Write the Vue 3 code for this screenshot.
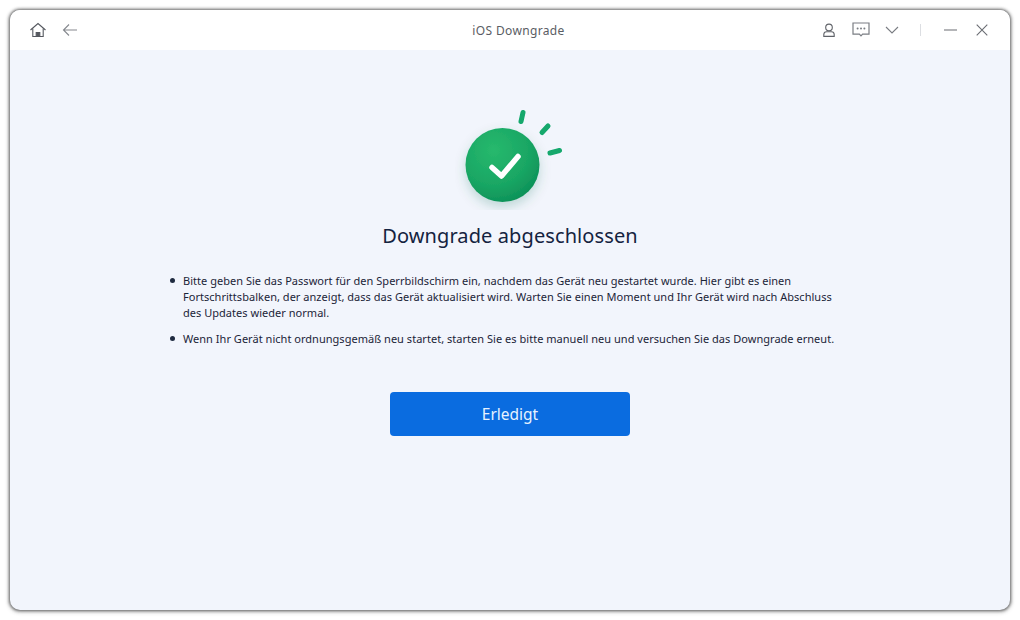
<script setup>
const items = [
  ['Bitte geben Sie das Passwort für den Sperrbildschirm ein, nachdem das Gerät neu gestartet wurde. Hier gibt es einen', 'Fortschrittsbalken, der anzeigt, dass das Gerät aktualisiert wird. Warten Sie einen Moment und Ihr Gerät wird nach Abschluss', 'des Updates wieder normal.'],
  ['Wenn Ihr Gerät nicht ordnungsgemäß neu startet, starten Sie es bitte manuell neu und versuchen Sie das Downgrade erneut.'],
]
</script>

<template>
  <div class="page">
    <div class="window">
      <header class="bar">
        <div class="left">
          <svg class="ic" width="18" height="18" viewBox="0 0 18 18" fill="none" stroke="#55585f" stroke-width="1.1">
            <path d="M1.5 9 9 2.5 16.5 9" />
            <path d="M3.8 7.5V15.5H14.2V7.5" />
            <path d="M7.2 15.5V11.5H10.8V15.5Z" fill="#55585f" />
          </svg>
          <svg class="ic" width="16" height="14" viewBox="0 0 16 14" fill="none" stroke="#85888e" stroke-width="1.1">
            <path d="M15 7H1.5M7 1.5 1.5 7 7 12.5" />
          </svg>
        </div>
        <div class="title">iOS Downgrade</div>
        <div class="right">
          <svg width="14" height="14" viewBox="0 0 14 14" fill="none" stroke="#5f6268" stroke-width="1.1">
            <circle cx="7" cy="4.4" r="3.3" />
            <path d="M1.8 13.4V11.6C1.8 9.9 3 8.8 4.6 8.8H9.4C11 8.8 12.2 9.9 12.2 11.6V13.4Z" />
          </svg>
          <svg class="chat" width="18" height="16" viewBox="0 0 18 16" fill="none" stroke="#7a7d83" stroke-width="1.2">
            <path d="M1 1H17V12.2H10.6L9 13.8 7.4 12.2H1Z" />
            <g fill="#7a7d83" stroke="none"><circle cx="5.6" cy="6.6" r="1" /><circle cx="9" cy="6.6" r="1" /><circle cx="12.4" cy="6.6" r="1" /></g>
          </svg>
          <svg class="chev" width="14" height="8" viewBox="0 0 14 8" fill="none" stroke="#7a7d83" stroke-width="1.1">
            <path d="M1 1 7 7 13 1" />
          </svg>
          <span class="sep"></span>
          <svg class="min" width="13" height="2" viewBox="0 0 13 2" stroke="#6a6d73" stroke-width="1.2"><path d="M0 1H13" /></svg>
          <svg class="close" width="12" height="12" viewBox="0 0 12 12" stroke="#6a6d73" stroke-width="1.1"><path d="M.7.7 11.3 11.3M11.3.7.7 11.3" /></svg>
        </div>
      </header>
      <main class="content">
        <svg class="badge" width="110" height="104" viewBox="0 0 110 104">
          <defs>
            <radialGradient id="g" cx="0.38" cy="0.3" r="0.8">
              <stop offset="0" stop-color="#27b96d" />
              <stop offset="0.6" stop-color="#19a664" />
              <stop offset="1" stop-color="#0a8c55" />
            </radialGradient>
            <filter id="s" x="-40%" y="-40%" width="180%" height="190%">
              <feDropShadow dx="0" dy="5" stdDeviation="6" flood-color="#0c6a50" flood-opacity=".22" />
            </filter>
            <filter id="b" x="-30%" y="-30%" width="160%" height="160%">
              <feGaussianBlur stdDeviation=".4" />
            </filter>
          </defs>
          <circle cx="47.5" cy="59" r="37" fill="url(#g)" filter="url(#s)" />
          <path d="M37 61.5 46.5 70 63 50.5" fill="none" stroke="#fff" stroke-width="5.5" stroke-linecap="round" stroke-linejoin="round" filter="url(#b)" />
          <g stroke="#12a86c" stroke-width="5" stroke-linecap="round" filter="url(#b)">
            <path d="M68 6.5 66 15.5" />
            <path d="M93 20 87 26.5" />
            <path d="M104.500 44.500 95 47" />
          </g>
        </svg>
        <h1>Downgrade abgeschlossen</h1>
        <ul>
          <li v-for="(lines, i) in items" :key="i">
            <span v-for="line in lines" :key="line" class="line">{{ line }}</span>
          </li>
        </ul>
        <button type="button">Erledigt</button>
      </main>
    </div>
  </div>
</template>

<style>
html, body { margin: 0; background: #fff; }
</style>

<style scoped>
.page { width: 1020px; height: 620px; padding: 10px; box-sizing: border-box; font-family: "Noto Sans", "Open Sans", sans-serif; }
.window { width: 1000px; height: 600px; border-radius: 10px; background: #f2f5fc; overflow: hidden; display: flex; flex-direction: column; box-shadow: 0 0 3px 1px rgba(50,50,50,.65), 0 1px 4px 1px rgba(60,60,60,.3); }
.bar { height: 40px; flex: none; background: #fff; display: grid; grid-template-columns: 1fr auto 1fr; align-items: center; padding: 0 22px 0 19px; }
.left { display: flex; align-items: center; gap: 15px; }
.right { display: flex; align-items: center; justify-content: flex-end; }
.title { font-size: 12px; color: #5a5d64; letter-spacing: .35px; margin-left: 20px; }
.chat { margin-left: 16px; }
.chev { margin-left: 15px; }
.sep { width: 1px; height: 12px; background: #dcdee2; margin-left: 21px; }
.min { margin-left: 23px; }
.close { margin-left: 19px; }
.content { flex: 1; display: flex; flex-direction: column; align-items: center; color: #1a2438; }
.badge { margin-top: 56px; display: block; }
h1 { margin: 11px 0 0; font-size: 20px; line-height: 30px; font-weight: 400; color: #142340; letter-spacing: .1px; }
ul { list-style: none; margin: 22px 0 0; padding: 0; width: 680px; font-size: 11px; line-height: 16px; letter-spacing: .028px; color: #1b2438; }
li { position: relative; padding-left: 13px; margin-bottom: 10px; }
li::before { content: ""; position: absolute; left: 0; top: 5px; width: 5px; height: 5px; border-radius: 50%; background: #1f2b40; }
.line { display: block; white-space: nowrap; }
button { margin-top: 35px; width: 240px; height: 44px; border: 0; border-radius: 4px; background: #0a6ce0; color: #e6f2ff; font: 400 15.5px "Noto Sans", sans-serif; }
</style>
